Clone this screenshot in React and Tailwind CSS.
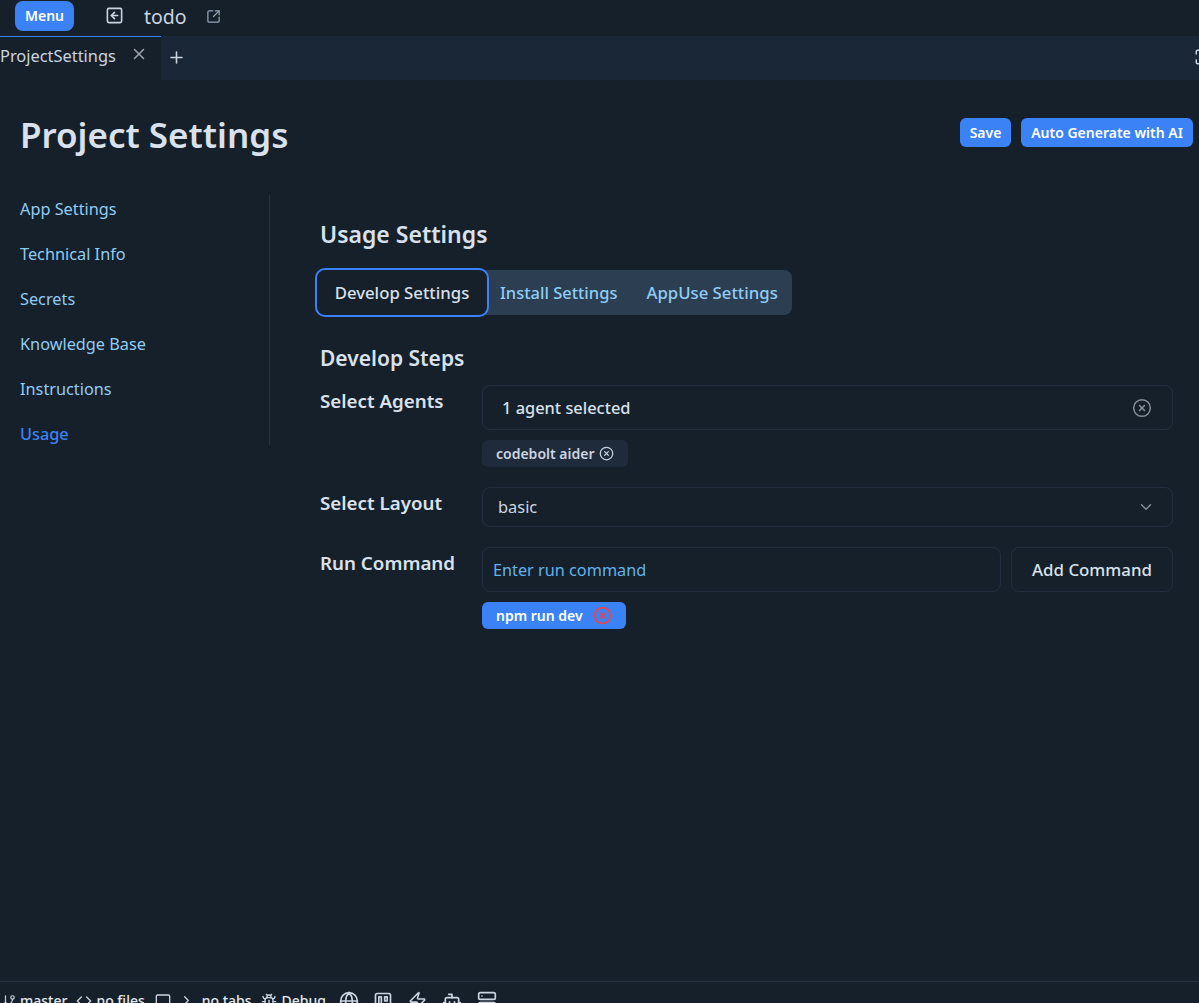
import React from "react";
import {
  Bot,
  Bug,
  ChevronDown,
  ChevronRight,
  Code,
  CircleX,
  GitBranch,
  Globe,
  Maximize,
  MessageSquare,
  Plus,
  Server,
  SquareArrowLeft,
  SquareArrowOutUpRight,
  X,
  Zap,
} from "lucide-react";

const navItems = ["App Settings", "Technical Info", "Secrets", "Knowledge Base", "Instructions"];

// board icon in the status bar
const BoardIcon = () => (
  <svg
    className="ml-[14px] text-[#cbd5e1]"
    width="20"
    height="20"
    viewBox="0 0 24 24"
    fill="none"
    stroke="currentColor"
    strokeWidth="2"
    strokeLinecap="round"
    strokeLinejoin="round"
  >
    <rect x="3" y="3" width="18" height="18" rx="2" />
    <rect x="7" y="7" width="3" height="9" />
    <rect x="14" y="7" width="3" height="5" />
  </svg>
);

const App = () => {
  return (
    <div className="h-[1003px] w-full overflow-hidden bg-[#16202a] font-['Noto_Sans',sans-serif] text-[#e2e8f0] flex flex-col">
      {/* top bar */}
      <div className="h-9 flex items-start shrink-0">
        <button className="ml-[15px] mt-px h-[30px] w-[59px] rounded-lg bg-[#3b82f6] text-white text-sm font-semibold">
          Menu
        </button>
        <SquareArrowLeft className="ml-[31px] mt-[6px] text-[#cbd5e1]" size={19} strokeWidth={2} />
        <span className="ml-[20px] mt-[5px] text-[19.5px] leading-6 text-[#cbd5e1]">todo</span>
        <SquareArrowOutUpRight className="ml-[19px] mt-[9px] text-[#94a3b8]" size={15} strokeWidth={2} />
      </div>

      {/* tab row */}
      <div className="h-11 flex shrink-0 bg-[#1a2736]">
        <div className="w-[161px] flex items-start border-t border-[#3b82f6] bg-[#16202a]">
          <span className="mt-[7px] text-[16.4px] leading-6 text-[#cbd5e1]">ProjectSettings</span>
          <X className="ml-[14px] mt-[8px] text-[#9ca3af]" size={18} strokeWidth={2} />
        </div>
        <Plus className="ml-[6px] mt-[12px] text-[#cbd5e1]" size={19} strokeWidth={2} />
        <div className="flex-1" />
        <Maximize className="mr-[-13px] mt-[12px] text-[#cbd5e1]" size={18} strokeWidth={2} />
      </div>

      {/* page */}
      <div className="flex-1 min-h-0 relative">
        <div className="flex items-start justify-between pl-[20px] pr-[6px]">
          <h1 className="mt-[30px] text-[35px] leading-[50px] font-semibold text-[#d9e1ec]">Project Settings</h1>
          <div className="mt-[38px] flex gap-[10px]">
            <button className="h-[29px] w-[51px] rounded-md bg-[#3b82f6] text-white text-sm font-semibold">Save</button>
            <button className="h-[29px] w-[172px] rounded-md bg-[#3b82f6] text-white text-sm font-semibold">
              Auto Generate with AI
            </button>
          </div>
        </div>

        <div className="flex mt-[35px]">
          <nav className="w-[270px] h-[250px] shrink-0 border-r border-[#243241] pl-5 flex flex-col">
            {navItems.map((item) => (
              <a key={item} className="h-[45px] shrink-0 pt-[2px] text-[16.3px] leading-6 text-[#90cdf4]">
                {item}
              </a>
            ))}
            <a className="h-[45px] shrink-0 pt-[2px] text-[16.3px] leading-6 font-medium text-[#3b82f6]">Usage</a>
          </nav>

          <div className="flex-1 pl-[50px] pr-[26px]">
            <h2 className="mt-[23px] text-[23px] leading-8 font-semibold text-[#d9e1ec]">Usage Settings</h2>

            <div className="mt-[18px] -ml-[5px] w-fit flex items-center h-[49px]">
              <div className="h-[45px] w-[477px] rounded-lg bg-[#2c3e52] flex items-center relative">
                <button className="h-[49px] w-[174px] shrink-0 rounded-[10px] border-2 border-[#3b82f6] bg-[#16202a] text-[16.75px] font-medium text-[#d9e1ec]">
                  Develop Settings
                </button>
                <span className="ml-[11px] pt-[2px] text-[16.5px] font-medium text-[#90cdf4]">Install Settings</span>
                <span className="ml-[29px] text-[16.75px] font-medium text-[#90cdf4]">AppUse Settings</span>
              </div>
            </div>

            <h3 className="mt-[27px] text-[21px] leading-7 font-semibold text-[#d9e1ec]">Develop Steps</h3>

            <div className="mt-[13px] flex">
              <label className="w-[162px] shrink-0 pt-[2px] text-[18.75px] leading-[28px] font-semibold text-[#d9e1ec]">Select Agents</label>
              <div className="flex-1">
                <div className="h-[45px] rounded-lg border border-[#212e3d] flex items-center justify-between pl-[19px] pr-[20px]">
                  <span className="pt-[2px] text-[16.4px] font-medium text-[#d9e1ec]">1 agent selected</span>
                  <CircleX className="text-[#8a929e]" size={20} strokeWidth={1.75} />
                </div>
                <div className="mt-[10px] h-[27px] w-fit rounded-md bg-[#1f2b3a] flex items-center pl-[14px] pr-[14px] gap-[4px] text-sm font-semibold text-[#cbd5e1]">
                  codebolt aider
                  <CircleX className="text-[#cbd5e1]" size={15} strokeWidth={2} />
                </div>
              </div>
            </div>

            <div className="mt-[20px] flex">
              <label className="w-[162px] shrink-0 text-[18.75px] leading-[32px] font-semibold text-[#d9e1ec]">Select Layout</label>
              <div className="flex-1 h-[40px] rounded-lg border border-[#212e3d] flex items-center justify-between pl-[15px] pr-[17px]">
                <span className="text-[16.4px] text-[#cbd5e1]">basic</span>
                <ChevronDown className="text-[#8a929e]" size={18} strokeWidth={1.75} />
              </div>
            </div>

            <div className="mt-[20px] flex">
              <label className="w-[162px] shrink-0 text-[18.75px] leading-[32px] font-semibold text-[#d9e1ec]">Run Command</label>
              <div className="flex-1">
                <div className="flex gap-[10px]">
                  <div className="flex-1 h-[45px] rounded-lg border border-[#212e3d] flex items-center pl-[10px] pt-[2px] text-[16.25px] text-[#63b3ed]">
                    Enter run command
                  </div>
                  <button className="h-[45px] w-[162px] rounded-lg border border-[#212e3d] text-[16.85px] font-medium text-[#d9e1ec]">
                    Add Command
                  </button>
                </div>
                <div className="mt-[10px] h-[27px] w-fit rounded-md bg-[#3b82f6] flex items-center pl-[14px] pr-[14px] gap-[10px] text-sm font-semibold text-white">
                  npm run dev
                  <CircleX className="text-[#ef4444]" size={19} strokeWidth={2} />
                </div>
              </div>
            </div>
          </div>
        </div>
      </div>

      {/* status bar, cut off by the window */}
      <div className="h-[22px] shrink-0 border-t border-[#243241] overflow-hidden">
        <div className="flex items-center h-[32px] pt-[5px] text-sm font-medium text-[#e2e8f0]">
          <GitBranch className="ml-[2px] text-[#cbd5e1]" size={14} strokeWidth={2} />
          <span className="ml-[4px]">master</span>
          <Code className="ml-[9px] text-[#cbd5e1]" size={16} strokeWidth={2} />
          <span className="ml-[4px]">no files</span>
          <MessageSquare className="ml-[10px] text-[#cbd5e1]" size={16} strokeWidth={2} />
          <ChevronRight className="ml-[8px] text-[#cbd5e1]" size={15} strokeWidth={2} />
          <span className="ml-[8px]">no tabs</span>
          <Bug className="ml-[9px] text-[#cbd5e1]" size={16} strokeWidth={2} />
          <span className="ml-[5px]">Debug</span>
          <Globe className="ml-[13px] text-[#cbd5e1]" size={20} strokeWidth={2} />
          <BoardIcon />
          <Zap className="ml-[15px] text-[#cbd5e1]" size={19} strokeWidth={2} />
          <Bot className="ml-[15px] text-[#cbd5e1]" size={20} strokeWidth={2} />
          <Server className="ml-[15px] text-[#cbd5e1]" size={20} strokeWidth={2} />
        </div>
      </div>
    </div>
  );
};

export default App;
